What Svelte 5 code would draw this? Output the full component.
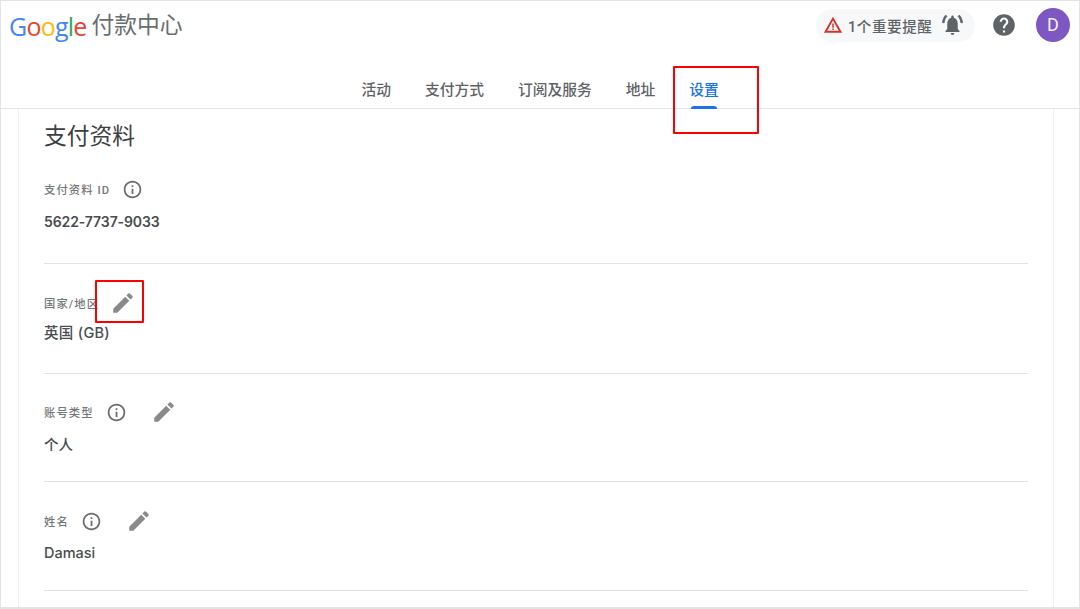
<script lang="ts">
  const tabs = ['活动', '支付方式', '订阅及服务', '地址', '设置'];
  const logo = [
    ['G', '#4285f4'], ['o', '#ea4335'], ['o', '#fbbc05'],
    ['g', '#4285f4'], ['l', '#34a853'], ['e', '#ea4335']
  ];
  const rows = [
    { label: '支付资料 ID', value: '5622-7737-9033', info: true, edit: false, cls: 'r1' },
    { label: '国家/地区', value: '英国 (GB)', info: false, edit: true, cls: 'r2' },
    { label: '账号类型', value: '个人', info: true, edit: true, cls: 'r3' },
    { label: '姓名', value: 'Damasi', info: true, edit: true, cls: 'r4' }
  ];
</script>

<div class="page">
  <header>
    <div class="top">
      <div class="brand">
        <span class="logo">{#each logo as l}<span style="color: {l[1]}">{l[0]}</span>{/each}</span>
        <span class="product">付款中心</span>
      </div>
      <div class="actions">
        <div class="alert">
          <svg width="18" height="18" viewBox="0 0 24 24">
            <path d="M12 3.500 22 21H2Z" fill="none" stroke="#d93025" stroke-width="2.600" />
            <path d="M11 10h2v5.500h-2zM11 16.800h2v2h-2z" fill="#d93025" />
          </svg>
          <span class="alert-text">1个重要提醒</span>
          <svg class="bell" width="21" height="24" viewBox="0 0 24 24" preserveAspectRatio="none" fill="#5f6368">
            <path d="M12 22c1.100 0 2-.9 2-2h-4c0 1.100.9 2 2 2zm6-6v-5c0-3.100-1.600-5.600-4.500-6.300V4c0-.8-.7-1.500-1.500-1.500s-1.500.7-1.500 1.500v.7C7.600 5.400 6 7.900 6 11v5l-2 2v1h16v-1z" />
            <path d="M5.600 3.400 4.200 2.100C2.100 4.100.8 6.700.5 9.700h2c.3-2.500 1.400-4.700 3.100-6.300zM21.500 9.700h2c-.3-3-1.600-5.600-3.700-7.600l-1.400 1.300c1.700 1.600 2.800 3.800 3.100 6.300z" stroke="#5f6368" stroke-width="0.800" />
          </svg>
        </div>
        <svg class="help" width="26" height="26" viewBox="0 0 24 24" fill="#5f6368">
          <path d="M12 2C6.480 2 2 6.480 2 12s4.480 10 10 10 10-4.480 10-10S17.520 2 12 2zm1 17h-2v-2h2v2zm2.070-7.750-.9.920C13.450 12.900 13 13.500 13 15h-2v-.5c0-1.100.45-2.100 1.170-2.830l1.240-1.260c.37-.36.590-.86.590-1.410 0-1.100-.9-2-2-2s-2 .9-2 2H8c0-2.210 1.790-4 4-4s4 1.790 4 4c0 .88-.36 1.680-.93 2.250z" />
        </svg>
        <div class="avatar">D</div>
      </div>
    </div>
    <nav>
      {#each tabs as t, i}
        <span class="tab" class:active={i === tabs.length - 1}>{t}</span>
      {/each}
    </nav>
  </header>

  <main>
    <section class="card">
      <h1>支付资料</h1>
      {#each rows as r}
        <div class="row {r.cls}">
          <div class="label">
            <span>{r.label}</span>
            {#if r.info}
              <svg class="info" width="21" height="21" viewBox="0 0 24 24" fill="#6b6b6b">
                <path d="M11 7h2v2h-2zm0 4h2v6h-2zm1-9C6.480 2 2 6.480 2 12s4.480 10 10 10 10-4.480 10-10S17.520 2 12 2zm0 18c-4.410 0-8-3.590-8-8s3.590-8 8-8 8 3.590 8 8-3.590 8-8 8z" />
              </svg>
            {/if}
            {#if r.edit}
              <svg class="edit" width="26" height="26" viewBox="0 0 24 24" fill="#8a8a8a">
                <path d="M3 17.250V21h3.750L17.810 9.940l-3.750-3.750L3 17.250zM20.710 7.040a1 1 0 0 0 0-1.410l-2.340-2.340a1 1 0 0 0-1.410 0l-1.830 1.830 3.750 3.750 1.830-1.830z" />
              </svg>
            {/if}
          </div>
          <div class="value">{r.value}</div>
        </div>
      {/each}
    </section>
  </main>

  <div class="mark mark-tab"></div>
  <div class="mark mark-edit"></div>
</div>

<style>
  :global(body) { margin: 0; background: #fff; }
  .page {
    position: relative;
    box-sizing: border-box;
    width: 1080px;
    height: 609px;
    overflow: hidden;
    background: #fff;
    border: 1px solid #e3e3e3;
    border-bottom-width: 2px;
    font-family: Roboto, "Noto Sans CJK SC", sans-serif;
    color: #3c4043;
  }
  header {
    box-sizing: border-box;
    height: 108px;
    border-bottom: 1px solid #e6e6e6;
  }
  .top {
    display: flex;
    align-items: flex-start;
    justify-content: space-between;
    height: 70px;
  }
  .brand {
    display: flex;
    align-items: center;
    gap: 5px;
    padding: 7px 0 0 8px;
    height: 36px;
  }
  .logo {
    font-family: "Open Sans", sans-serif;
    font-size: 25px;
    letter-spacing: -0.8px;
    line-height: 36px;
  }
  .product {
    font-size: 22.750px;
    color: #6a6d71;
    line-height: 36px;
  }
  .actions {
    display: flex;
    align-items: center;
    padding: 7px 9px 0 0;
  }
  .alert {
    display: flex;
    align-items: center;
    box-sizing: border-box;
    height: 33px;
    width: 159px;
    padding: 0 7px 0 8px;
    margin-right: 16px;
    border-radius: 17px;
    background: #f7f8f9;
  }
  .alert-text {
    margin-left: 6px;
    font-size: 14.500px;
    letter-spacing: 0.6px;
    font-weight: 500;
    color: #5f6368;
    white-space: nowrap;
  }
  .bell { margin-left: 10px; }
  .help { margin-right: 19px; }
  .avatar {
    width: 34px;
    height: 34px;
    border-radius: 50%;
    background: #7e57c2;
    color: #f3eefb;
    font-size: 18px;
    line-height: 34px;
    text-align: center;
  }
  nav {
    display: flex;
    gap: 34px;
    padding-left: 360.500px;
  }
  .tab {
    position: relative;
    font-size: 14.750px;
    font-weight: 500;
    line-height: 38px;
    color: #5f6368;
  }
  .tab.active { color: #1a73e8; }
  .tab.active::after {
    content: '';
    position: absolute;
    left: 2px;
    right: 2px;
    bottom: 0;
    height: 3px;
    border-radius: 3px 3px 0 0;
    background: #1a73e8;
  }
  main { padding: 0 25px 0 17px; }
  .card {
    box-sizing: border-box;
    height: 500px;
    padding: 0 25px;
    border-left: 1px solid #efefef;
    border-right: 1px solid #efefef;
  }
  h1 {
    margin: 0;
    padding-top: 13px;
    height: 42px;
    font-size: 22.750px;
    font-weight: 400;
    line-height: 30px;
    color: #3c4043;
  }
  .row {
    box-sizing: border-box;
    border-bottom: 1px solid #e3e3e3;
  }
  .r1 { height: 100px; padding-top: 12px; }
  .r2 { height: 110px; padding-top: 26px; }
  .r3 { height: 108px; padding-top: 25px; }
  .r4 { height: 109px; padding-top: 26px; }
  .label {
    display: flex;
    align-items: center;
    height: 26px;
    font-size: 11.300px;
    letter-spacing: 1.100px;
    font-weight: 500;
    color: #75787b;
  }
  .info { margin-left: 12px; }
  .edit { margin-left: 24px; }
  .r2 .edit { margin-left: 11px; }
  .value {
    font-family: Inter, "Noto Sans CJK SC", sans-serif;
    font-size: 14.500px;
    font-weight: 500;
    line-height: 22px;
    color: #4a4d50;
  }
  .r1 .value { margin-top: 9px; font-size: 14px; font-weight: 600; letter-spacing: -0.1px; }
  .r2 .value { margin-top: 6px; letter-spacing: 0.3px; }
  .r3 .value { margin-top: 9px; }
  .r4 .value { margin-top: 8px; }
  .mark {
    position: absolute;
    box-sizing: border-box;
    border: 2px solid #f00;
    border-radius: 1px;
  }
  .mark-tab { left: 672px; top: 65px; width: 86px; height: 68px; }
  .mark-edit { left: 94px; top: 279px; width: 49px; height: 43px; }
</style>
